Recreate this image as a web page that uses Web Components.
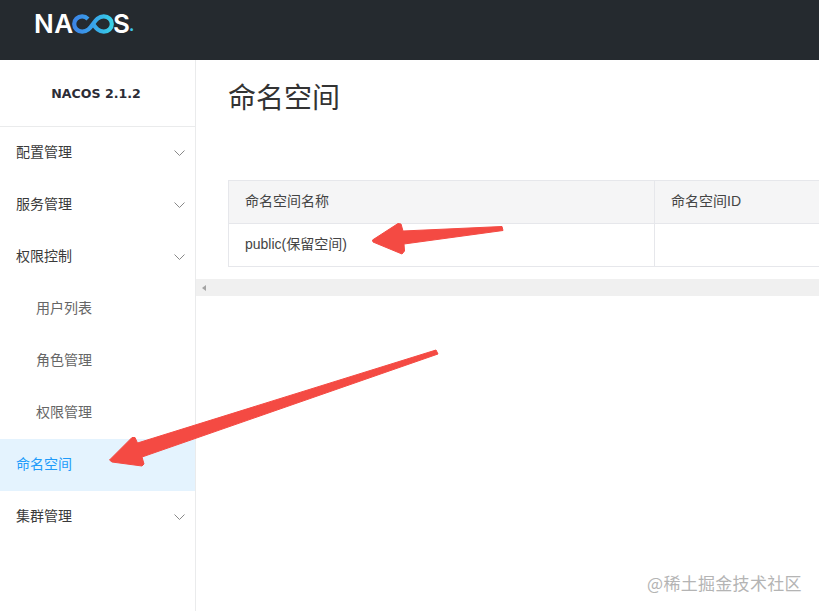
<!DOCTYPE html>
<html lang="zh">
<head>
<meta charset="utf-8">
<title>NACOS</title>
<style>
  html, body { margin: 0; height: 100%; overflow: hidden; background: #fff; }
  body { font-family: "Liberation Sans", "Noto Sans CJK SC", sans-serif; }
</style>
</head>
<body>
<nacos-app>
  <nacos-header slot="header"></nacos-header>
  <nacos-sidebar slot="sidebar" version="NACOS 2.1.2">
    <nacos-menu-item label="配置管理" expandable></nacos-menu-item>
    <nacos-menu-item label="服务管理" expandable></nacos-menu-item>
    <nacos-menu-item label="权限控制" expandable></nacos-menu-item>
    <nacos-menu-item label="用户列表" child></nacos-menu-item>
    <nacos-menu-item label="角色管理" child></nacos-menu-item>
    <nacos-menu-item label="权限管理" child></nacos-menu-item>
    <nacos-menu-item label="命名空间" active></nacos-menu-item>
    <nacos-menu-item label="集群管理" expandable></nacos-menu-item>
  </nacos-sidebar>
  <namespace-page slot="main"></namespace-page>
</nacos-app>
<red-arrows></red-arrows>
<juejin-mark>@稀土掘金技术社区</juejin-mark>

<script>
class NacosApp extends HTMLElement {
  constructor() {
    super();
    this.attachShadow({ mode: "open" });
    this.shadowRoot.innerHTML = `
    <style>
      :host { display: flex; flex-direction: column; width: 819px; height: 611px; overflow: hidden; }
      .body { flex: 1; display: flex; min-height: 0; }
    </style>
    <slot name="header"></slot>
    <div class="body">
      <slot name="sidebar"></slot>
      <slot name="main"></slot>
    </div>
  `;
  }
}

class NacosHeader extends HTMLElement {
  constructor() {
    super();
    this.attachShadow({ mode: "open" });
    this.shadowRoot.innerHTML = `
    <style>
      :host { display: flex; flex: none; height: 60px; background: #252a2f; padding: 11px 0 0 34px; box-sizing: border-box; }
      .logo {
        display: flex;
        align-items: center;
        height: 26px;
        color: #fff;
        font: 600 26px/26px "Inter", "Liberation Sans", sans-serif;
      }
      .na { width: 37px; letter-spacing: .4px; white-space: nowrap; }
      .logo svg { flex: none; width: 42px; height: 20px; margin-left: 1px; }
      .s { margin-left: -1px; }
      .dot { color: #3ec6e8; font-size: 15px; font-weight: 800; align-self: flex-end; line-height: 22px; margin-left: -1px; }
    </style>
    <div class="logo">
      <span class="na">NA</span>
      <svg viewBox="0 0 42 20" fill="none">
        <defs>
          <linearGradient id="inf" x1="0" y1="0" x2="1" y2="0">
            <stop offset="0" stop-color="#3c85e6"/>
            <stop offset=".55" stop-color="#38a6ea"/>
            <stop offset="1" stop-color="#37cfe6"/>
          </linearGradient>
        </defs>
        <path d="M16 5 C14.2 3.2 12.2 2.4 10.2 2.4 C5.6 2.4 2.2 5.8 2.2 10 C2.2 14.2 5.6 17.6 10.2 17.6 C16 17.6 18.4 13.6 21 10 C23.6 6.4 26 2.4 31.8 2.4 C36.4 2.4 39.8 5.8 39.8 10 C39.8 14.2 36.4 17.6 31.8 17.6 C26 17.6 23.6 13.6 21 10" stroke="url(#inf)" stroke-width="4.2" stroke-linecap="butt"/>
      </svg>
      <span class="s">S</span><span class="dot">.</span>
    </div>
  `;
  }
}

class NacosSidebar extends HTMLElement {
  constructor() {
    super();
    this.attachShadow({ mode: "open" });
    this.shadowRoot.innerHTML = `
    <style>
      :host { display: block; flex: none; width: 196px; box-sizing: border-box; border-right: 1px solid #eaebec; background: #fff; }
      .version {
        height: 67px;
        box-sizing: border-box;
        border-bottom: 1px solid #eaebec;
        display: flex;
        align-items: center;
        justify-content: center;
        color: #2c2c36;
        font: bold 12.6px "DejaVu Sans", sans-serif;
        padding-right: 3px;
      }
    </style>
    <div class="version"></div>
    <slot></slot>
  `;
  }

  connectedCallback() {
    this.shadowRoot.querySelector(".version").textContent = this.getAttribute("version");
  }
}

class NacosMenuItem extends HTMLElement {
  constructor() {
    super();
    this.attachShadow({ mode: "open" });
    this.shadowRoot.innerHTML = `
    <style>
      :host {
        display: flex;
        align-items: center;
        justify-content: space-between;
        height: 52px;
        padding: 0 10px 0 16px;
        box-sizing: border-box;
        color: #3a3a3a;
        font: 14px "Noto Sans CJK SC", sans-serif;
      }
      :host([child]) { padding-left: 36px; color: #666; }
      :host([active]) { background: #e4f3fe; color: #209bfa; }
      .label { padding-bottom: 4px; }
      svg { width: 11px; height: 6px; display: none; }
      :host([expandable]) svg { display: block; }
    </style>
    <span class="label"></span>
    <svg viewBox="0 0 11 6" fill="none"><path d="M.5.5 5.5 5.5 10.5.5" stroke="#888" stroke-width="1"/></svg>
  `;
  }

  connectedCallback() {
    this.shadowRoot.querySelector(".label").textContent = this.getAttribute("label");
  }
}

class NamespacePage extends HTMLElement {
  constructor() {
    super();
    this.attachShadow({ mode: "open" });
    this.shadowRoot.innerHTML = `
    <style>
      :host { display: block; flex: 1; min-width: 0; overflow: hidden; background: #fff; color: #444; font: 14px "Liberation Sans", "Noto Sans CJK SC", sans-serif; }
      .inner { padding: 0 0 0 32px; }
      h1 { margin: 0; height: 120px; padding-top: 16px; box-sizing: border-box; font: 400 28px/40px "Noto Sans CJK SC", sans-serif; color: #333; }
      .table {
        display: grid;
        grid-template-columns: 426px 426px;
        grid-auto-rows: 43px;
        width: 852px;
        box-sizing: border-box;
        border: 1px solid #e6e7eb;
        border-width: 1px 0 0 1px;
      }
      .cell {
        display: flex;
        align-items: center;
        padding: 0 0 4px 16px;
        box-sizing: border-box;
        border-right: 1px solid #e6e7eb;
        border-bottom: 1px solid #e6e7eb;
      }
      .head { background: #f5f5f6; }
      .scroll { height: 17px; margin-top: 12px; background: #f0f0f0; display: flex; align-items: center; padding-left: 6px; }
      .scroll i { width: 0; height: 0; border: 3.5px solid transparent; border-right: 4px solid #a3a3a3; border-left: 0; }
    </style>
    <div class="inner">
      <h1>命名空间</h1>
      <div class="table">
        <div class="cell head">命名空间名称</div>
        <div class="cell head">命名空间ID</div>
        <div class="cell">public(保留空间)</div>
        <div class="cell"></div>
      </div>
    </div>
    <div class="scroll"><i></i></div>
  `;
  }
}

// the two annotation arrows lie over the screenshot
class RedArrows extends HTMLElement {
  constructor() {
    super();
    this.attachShadow({ mode: "open" });
    this.shadowRoot.innerHTML = `
    <style>
      :host { position: absolute; left: 0; top: 0; width: 819px; height: 611px; pointer-events: none; }
      svg { display: block; }
    </style>
    <svg width="819" height="611" viewBox="0 0 819 611">
      <path d="M502 226.5 L503 230.5 L404 244 L404.5 251 L402 254 L373 242 L372.5 240 L398 223.5 L401 224 L403 231 Z" fill="#f44a43" stroke="#f44a43" stroke-width="1" stroke-linejoin="round"/>
      <path d="M436 350 L438 354 L142 457 L144 464 L142 466 L112 462 L109.5 460 L132 437.5 L135 437.5 L137.5 443 Z" fill="#f44a43" stroke="#f44a43" stroke-width="1" stroke-linejoin="round"/>
    </svg>
  `;
  }
}

class JuejinMark extends HTMLElement {
  constructor() {
    super();
    this.attachShadow({ mode: "open" });
    this.shadowRoot.innerHTML = `
    <style>
      :host { position: absolute; left: 647px; top: 571px; color: #b4b4b4; font: 17px/24px "Noto Sans CJK SC", sans-serif; letter-spacing: .3px; white-space: nowrap; }
    </style>
    <slot></slot>
  `;
  }
}

customElements.define("nacos-app", NacosApp);
customElements.define("nacos-header", NacosHeader);
customElements.define("nacos-sidebar", NacosSidebar);
customElements.define("nacos-menu-item", NacosMenuItem);
customElements.define("namespace-page", NamespacePage);
customElements.define("red-arrows", RedArrows);
customElements.define("juejin-mark", JuejinMark);
</script>
</body>
</html>
